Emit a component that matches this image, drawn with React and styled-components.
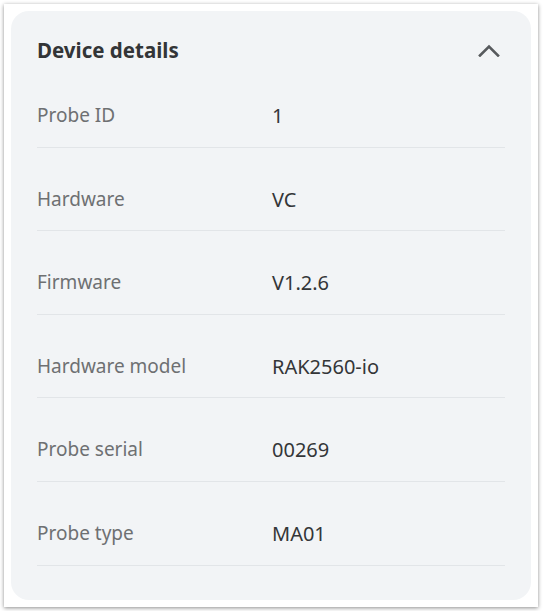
import React from 'react';
import styled, { createGlobalStyle } from 'styled-components';

const GlobalStyle = createGlobalStyle`
  html, body {
    margin: 0;
    padding: 0;
    background: #ffffff;
  }
  body {
    font-family: "Noto Sans", "Open Sans", sans-serif;
  }
`;

const rows = [
  { label: 'Probe ID', value: '1' },
  { label: 'Hardware', value: 'VC' },
  { label: 'Firmware', value: 'V1.2.6' },
  { label: 'Hardware model', value: 'RAK2560-io' },
  { label: 'Probe serial', value: '00269' },
  { label: 'Probe type', value: 'MA01' },
];

const Frame = styled.div`
  margin: 4px;
  width: 534px;
  height: 603px;
  box-sizing: border-box;
  padding: 7px;
  background: #ffffff;
  box-shadow: 0 1px 4px rgba(0, 0, 0, 0.45);
`;

const Card = styled.section`
  height: 100%;
  box-sizing: border-box;
  border-radius: 18px;
  background: #f2f4f6;
  padding: 24px 26px 0 26px;
`;

const Header = styled.div`
  display: flex;
  align-items: center;
  justify-content: space-between;
  height: 30px;
  margin-bottom: -1px;
`;

const Title = styled.h2`
  margin: 0;
  font-size: 20.5px;
  line-height: 30px;
  font-weight: 700;
  color: #333537;
`;

const ToggleButton = styled.button`
  display: flex;
  align-items: center;
  justify-content: center;
  width: 24px;
  height: 24px;
  margin-right: 4px;
  padding: 0;
  border: none;
  background: transparent;
  cursor: pointer;
`;

const Row = styled.div`
  display: grid;
  grid-template-columns: 235px 1fr;
  align-items: center;
  padding: 39px 0 18px 0;
  border-bottom: 1px solid #e2e5e8;
  line-height: 25.6px;
`;

const Label = styled.span`
  font-size: 19px;
  color: #6e7072;
`;

const Value = styled.span`
  font-size: 20px;
  color: #343638;
`;

const Chevron = () => (
  <svg width="22" height="13" viewBox="0 0 22 13" fill="none">
    <path d="M2 11.5 L11 2.5 L20 11.5" stroke="#575a5d" strokeWidth="2.6" strokeLinecap="square" />
  </svg>
);

export default function App() {
  return (
    <>
      <GlobalStyle />
      <Frame>
        <Card>
          <Header>
            <Title>Device details</Title>
            <ToggleButton aria-label="Collapse">
              <Chevron />
            </ToggleButton>
          </Header>
          {rows.map((r) => (
            <Row key={r.label}>
              <Label>{r.label}</Label>
              <Value>{r.value}</Value>
            </Row>
          ))}
        </Card>
      </Frame>
    </>
  );
}
